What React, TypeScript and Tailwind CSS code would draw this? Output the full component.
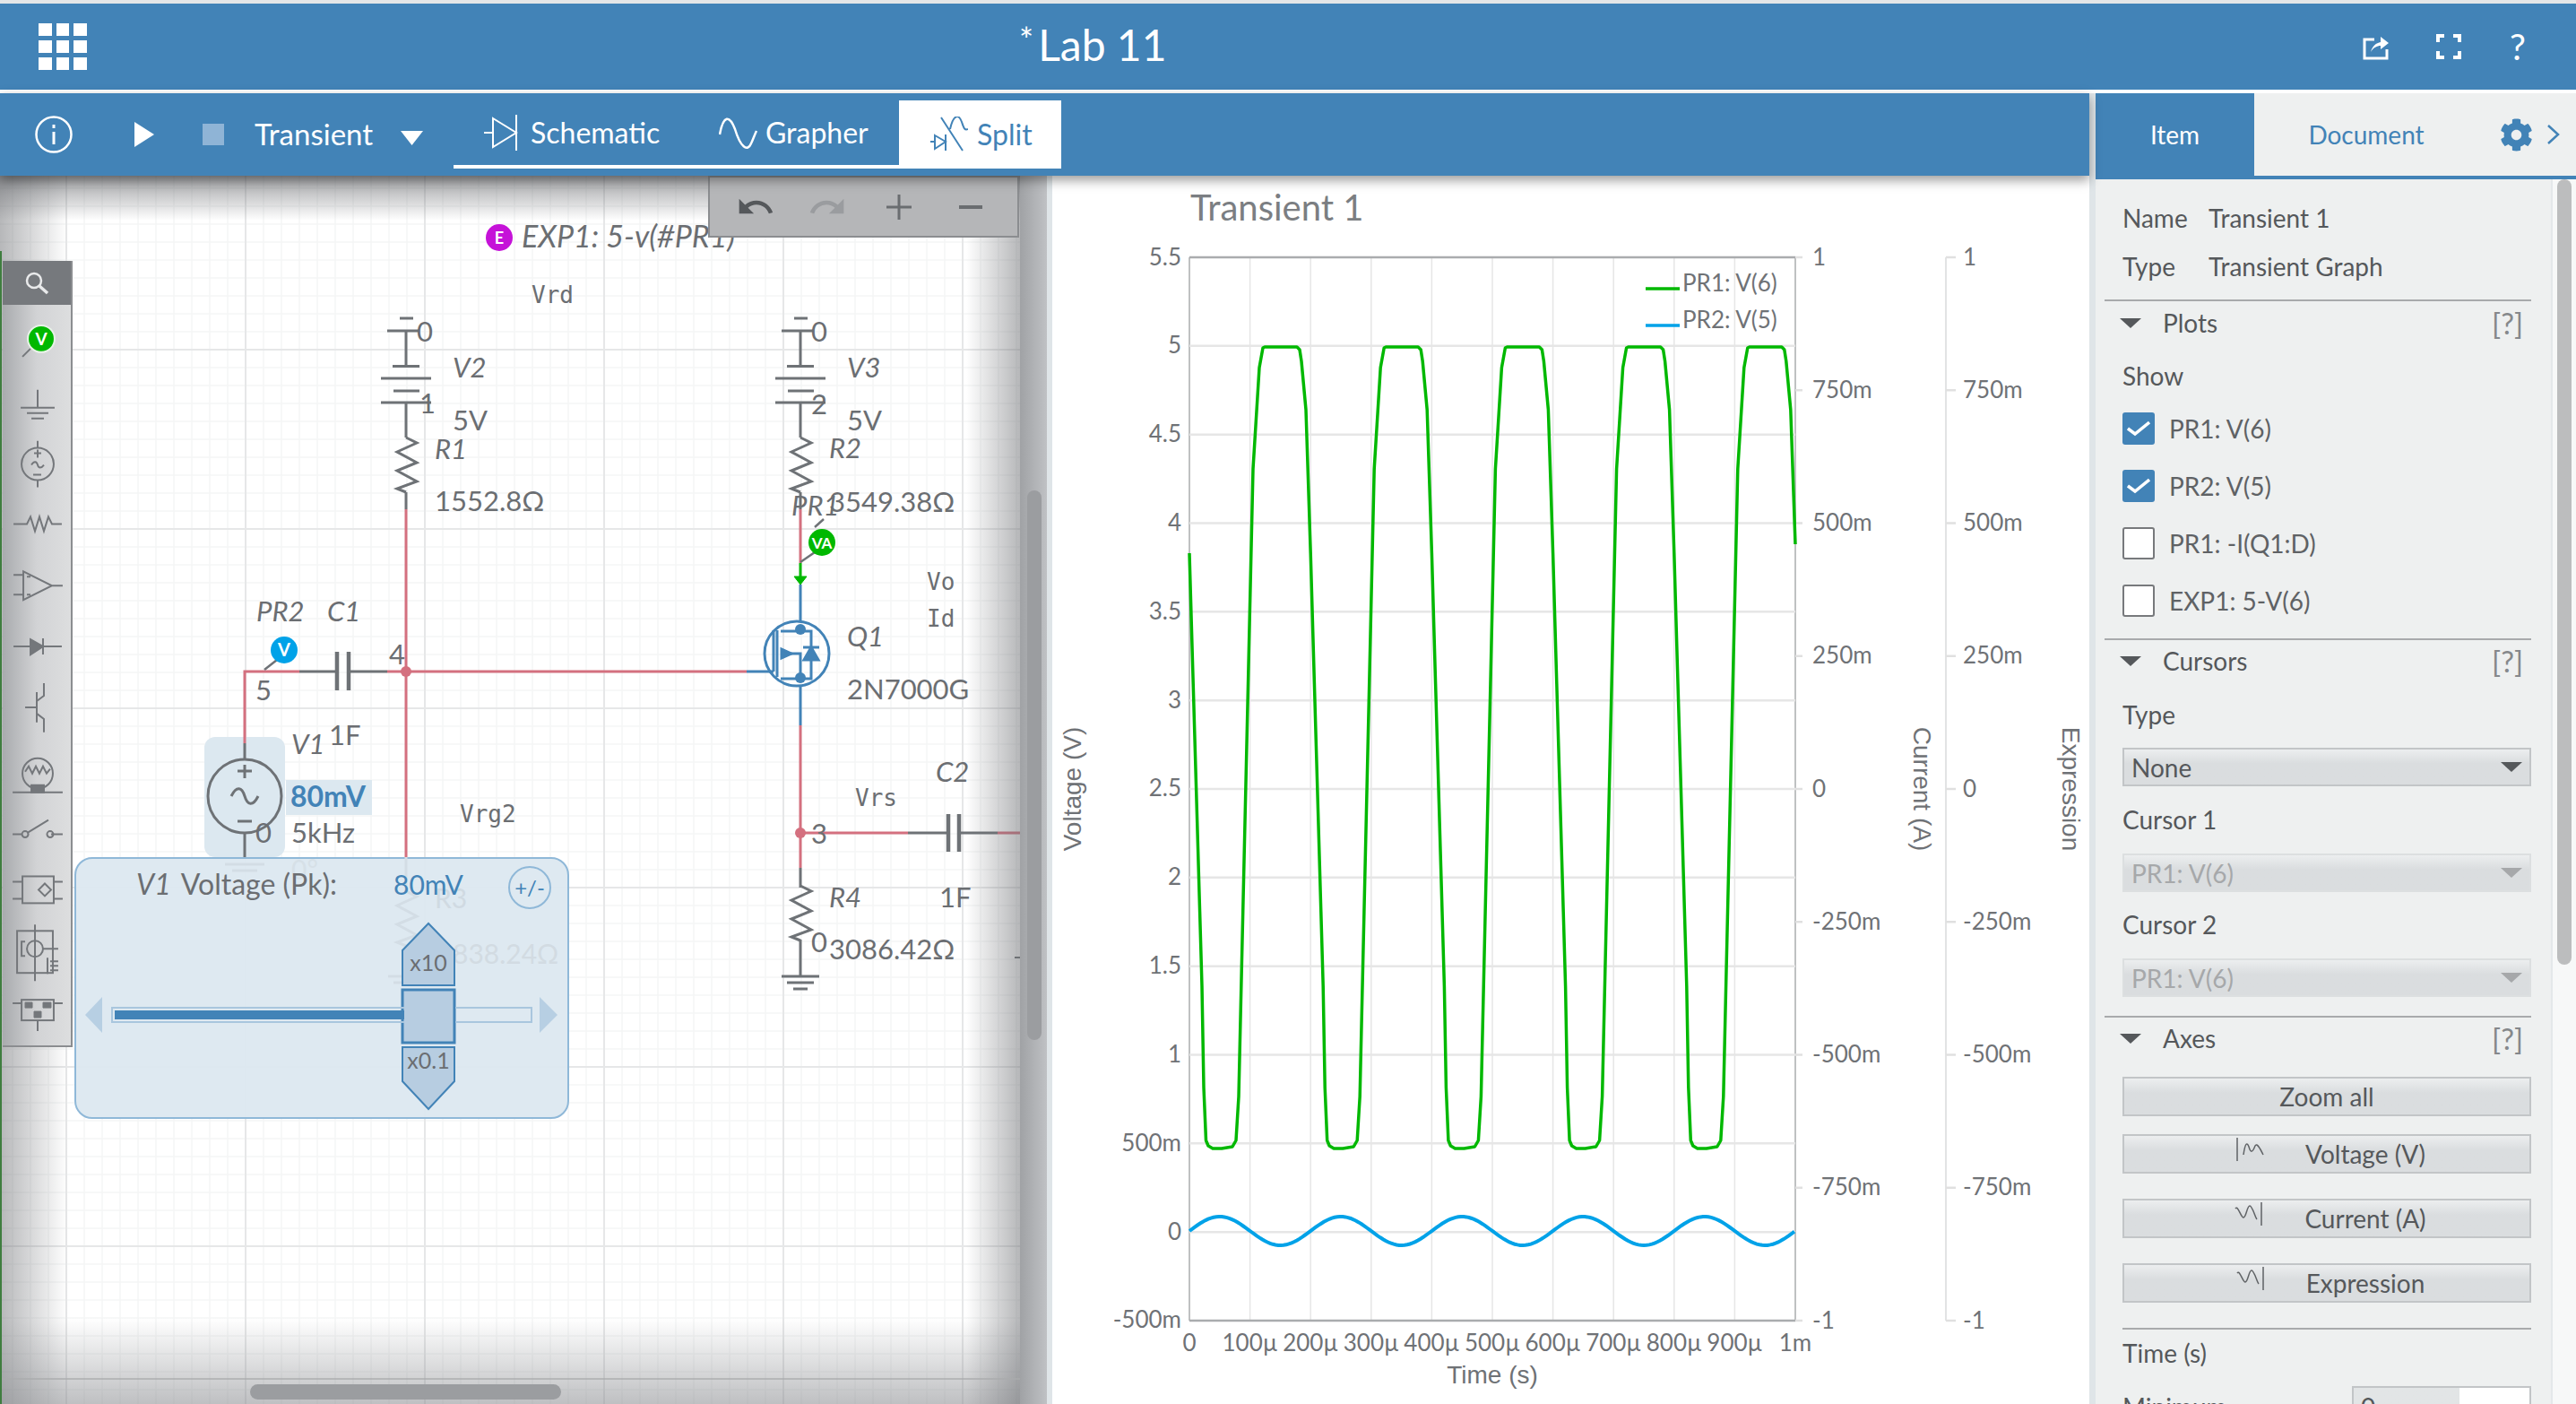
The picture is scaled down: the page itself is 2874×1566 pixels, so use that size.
import React from 'react';
import { FaCog } from 'react-icons/fa';
import { MdUndo, MdRedo } from 'react-icons/md';

const WIRE = '#6e7276';
const PINK = '#d4707f';
const BLUE = '#4283b7';
const GREEN = '#00b800';
const SKY = '#00a2e8';

const GridIcon = () => (
  <div className="grid grid-cols-3 gap-[5px] w-[54px] ml-[43px]">
    {Array.from({ length: 9 }).map((_, i) => (
      <div key={i} className="h-[14px] bg-white" />
    ))}
  </div>
);

const zig = (x: number, y: number) =>
  `M${x} ${y}L${x + 12} ${y + 6}L${x - 10} ${y + 16}L${x + 12} ${y + 28}L${x - 10} ${y + 37}L${x + 12} ${y + 49}L${x - 10} ${y + 57}L${x} ${y + 61}`;

const Battery = ({ x }: { x: number }) => (
  <g stroke={WIRE} strokeWidth="3" fill="none">
    <path d={`M${x - 7} 355H${x + 8}M${x - 21} 369H${x + 14}M${x} 369V408M${x - 15} 408.5H${x + 15}M${x - 28} 422H${x + 28}M${x - 14} 436H${x + 15}M${x - 28} 449H${x + 28}M${x} 449V488`} />
    <path d={zig(x, 488)} />
    <path d={`M${x} 549V568`} />
  </g>
);

const Probe = ({ cx, cy, color, label, lx, ly }: { cx: number; cy: number; color: string; label: string; lx: number; ly: number }) => (
  <g>
    <path d={`M${cx - 8} ${cy + 11}L${lx} ${ly}`} stroke={WIRE} strokeWidth="2.5" />
    <circle cx={cx} cy={cy} r="15" fill={color} />
    <text x={cx} y={cy + 7} textAnchor="middle" fill="white" fontSize={label.length > 1 ? 17 : 20} fontWeight="700">
      {label}
    </text>
  </g>
);

const SchematicCanvas = () => {
  const minorX = Array.from({ length: 60 }, (_, i) => 14 + i * 20);
  const minorY = Array.from({ length: 70 }, (_, i) => 190 + i * 20);
  const majorX = [74, 274, 474, 674, 874, 1074];
  const majorY = [190, 390, 590, 790, 990, 1190, 1390];
  const label = (t: string, x: number, y: number, italic = false) => (
    <text x={x} y={y} fontSize="31" fontStyle={italic ? 'italic' : 'normal'} fill="#6b6e72">
      {t}
    </text>
  );
  const mono = (t: string, x: number, y: number) => (
    <text x={x} y={y} fontSize="26" fill="#6b6e72" className="font-['DejaVu_Sans_Mono',monospace]">
      {t}
    </text>
  );
  return (
    <svg viewBox="0 196 1174 1370" className="absolute inset-0 w-[1174px] h-[1370px]">
      <rect x="0" y="196" width="1174" height="1370" fill="#ffffff" />
      {minorX.map((x) => (
        <line key={x} x1={x} x2={x} y1="196" y2="1566" stroke="#f5f6f6" strokeWidth="1.5" />
      ))}
      {minorY.map((y) => (
        <line key={y} y1={y} y2={y} x1="0" x2="1174" stroke="#f5f6f6" strokeWidth="1.5" />
      ))}
      {majorX.map((x) => (
        <line key={x} x1={x} x2={x} y1="196" y2="1566" stroke="#e6e7e8" strokeWidth="2" />
      ))}
      {majorY.map((y) => (
        <line key={y} y1={y} y2={y} x1="0" x2="1174" stroke="#e6e7e8" strokeWidth="2" />
      ))}

      {/* highlight behind the selected source */}
      <rect x="228" y="822" width="90" height="134" rx="12" fill="#dce8f0" />
      <rect x="319" y="870" width="96" height="39" fill="#dce8f0" />

      {/* pink wires */}
      <g stroke={PINK} strokeWidth="3" fill="none">
        <path d="M453 568V956M273 829V749H334M432 749H833M893 568V628M893 809V968M893 929H1013M1113 929H1138" />
      </g>
      <circle cx="453" cy="749" r="6" fill={PINK} />
      <circle cx="893" cy="929" r="6" fill={PINK} />

      {/* grey parts */}
      <Battery x={453} />
      <Battery x={893} />
      <g stroke={WIRE} strokeWidth="3" fill="none">
        <path d="M334 749H376M389 749H432M1013 929H1058M1070 929H1113M893 968V990M893 1048V1089M872 1089H914M878 1096H908M885 1103H901" />
        <path d={zig(893, 988)} />
        <path d="M376 727V770M389 727V770M1058 908V950M1070 908V950" strokeWidth="4.5" />
        <path d="M273 829V848M273 929V956" />
        <circle cx="273" cy="888" r="41" />
        <path d="M273 853V868M265 860H281M265 916H281M258 888C264 876 270 878 273 888S282 900 288 888" />
      </g>

      {/* Q1 */}
      <g stroke={BLUE} strokeWidth="3" fill="none">
        <path d="M893 652V692M893 766V809M833 749H863M863 749V703M867 703V755" />
        <circle cx="889" cy="729" r="36" />
        <path d="M871 704H905V757H871M871 729H893V757" />
        <circle cx="893" cy="702" r="6" fill={BLUE} stroke="none" />
        <circle cx="893" cy="756" r="6" fill={BLUE} stroke="none" />
        <path d="M883 729L872 724V734Z" fill={BLUE} />
        <path d="M905 722L897 736H913ZM896 722H914" fill={BLUE} />
      </g>
      <path d="M893 628V648" stroke={GREEN} strokeWidth="3" />
      <path d="M886 643H900L893 652Z" fill={GREEN} stroke={GREEN} strokeWidth="1" />

      <Probe cx={317} cy={725} color={SKY} label="V" lx={295} ly={747} />
      <path d="M909 588L919 579" stroke={WIRE} strokeWidth="2.5" />
      <Probe cx={917} cy={605} color={GREEN} label="VA" lx={893} ly={627} />

      <circle cx="557" cy="265" r="15" fill="#c512d8" />
      <text x="557" y="272" textAnchor="middle" fill="white" fontSize="18" fontWeight="700">
        E
      </text>
      <text x="582" y="276" fontSize="34" fontStyle="italic" fill="#6b6e72">
        EXP1: 5-v(#PR1)
      </text>

      {mono('Vrd', 593, 338)}
      {mono('Vrg2', 513, 917)}
      {mono('Vrs', 954, 899)}
      {mono('Vo', 1034, 658)}
      {mono('Id', 1034, 699)}

      {label('0', 465, 381)}
      {label('1', 468, 461)}
      {label('V2', 505, 421, true)}
      {label('5V', 505, 480)}
      {label('R1', 485, 512, true)}
      {label('1552.8Ω', 485, 570)}
      {label('0', 905, 381)}
      {label('2', 905, 462)}
      {label('V3', 945, 421, true)}
      {label('5V', 945, 480)}
      {label('R2', 925, 511, true)}
      {label('3549.38Ω', 925, 571)}
      {label('PR1', 883, 575, true)}
      {label('PR2', 286, 693, true)}
      {label('C1', 365, 693, true)}
      {label('5', 285, 781)}
      {label('4', 434, 741)}
      {label('V1', 325, 841, true)}
      {label('1F', 367, 831)}
      <text x="324" y="900" fontSize="32" fontWeight="700" fill={BLUE}>
        80mV
      </text>
      {label('5kHz', 325, 940)}
      {label('0', 285, 940)}
      {label('Q1', 945, 721, true)}
      {label('2N7000G', 945, 780)}
      {label('3', 905, 941)}
      {label('C2', 1044, 872, true)}
      {label('R4', 925, 1012, true)}
      {label('1F', 1048, 1012)}
      {label('0', 905, 1062)}
      {label('3086.42Ω', 925, 1070)}
      <path d="M1132 1068H1139" stroke={WIRE} strokeWidth="2" />
    </svg>
  );
};

const PartsPalette = () => (
  <div className="absolute left-[3px] top-[95px] w-[78px] h-[877px] flex flex-col border-r-2 border-b-2 border-[#8b8d90] bg-linear-to-r from-[#a9abae] via-[#d2d3d5] to-[#dddedf]">
    <div className="h-[49px] shrink-0 bg-[#76797d] flex items-center justify-center">
      <svg viewBox="0 0 28 28" className="w-[28px] h-[28px]" fill="none" stroke="#e9eaeb" strokeWidth="2.5">
        <circle cx="11" cy="11" r="8" />
        <path d="M17 17L26 25" strokeWidth="3.5" />
      </svg>
    </div>
    <svg viewBox="3 340 78 828" className="w-[78px] h-[828px]" fill="none" stroke="#74777b" strokeWidth="2">
      <path d="M25 398L34 389" />
      <circle cx="46" cy="378" r="15" fill={GREEN} stroke="#e8f2e8" strokeWidth="2" />
      <text x="46" y="385" textAnchor="middle" fontSize="19" fontWeight="700" fill="white" stroke="none">V</text>
      {/* ground */}
      <path d="M42 435V455M23 455H61M30 461H54M35 467H49" />
      {/* ac source */}
      <path d="M42 492V500M42 536V544" />
      <circle cx="42" cy="518" r="18" />
      <path d="M42 502V511M38 506H46M37 530H46M35 519C38 514 41 515 42 519S46 523 49 519" />
      {/* resistor */}
      <path d="M15 585H30L34 577L39 593L44 577L49 593L54 577L58 585H69" />
      {/* opamp */}
      <path d="M26 638V670L58 654ZM15 642H26M15 664H26M58 654H70M30 644H34M30 664H34" />
      {/* diode */}
      <path d="M15 722H34M48 722H69M48 713V731" />
      <path d="M34 714L48 722L34 731Z" fill="#74777b" />
      {/* transistor */}
      <path d="M28 790H41M41 773V807M49 763V777L41 783M41 797L49 803V818" />
      {/* lamp */}
      <circle cx="42" cy="864" r="17" />
      <path d="M14 885H70M28 862L32 856L36 864L40 856L44 864L48 856L52 864L56 859" />
      <path d="M35 877H49V885H35Z" fill="#74777b" />
      {/* switch */}
      <path d="M14 932H24M31 930L54 916M57 932H70" />
      <circle cx="28" cy="932" r="3.5" />
      <circle cx="56" cy="932" r="3.5" />
      {/* controlled source */}
      <path d="M14 985H25M14 1004H25M60 985H70M60 1004H70" />
      <rect x="25" y="979" width="35" height="30" />
      <path d="M50 987L57 994L50 1001L43 994Z" />
      {/* motor box */}
      <rect x="19" y="1040" width="40" height="47" />
      <circle cx="39" cy="1060" r="9" />
      <path d="M39 1033V1096M48 1060H65M28 1052H24V1068H28M53 1070V1088M56 1074H65M56 1079H65M56 1084H65" />
      {/* last part */}
      <path d="M14 1121H24M60 1121H70M42 1140V1152" />
      <rect x="24" y="1117" width="36" height="23" />
      <path d="M28 1120H36V1126H28ZM48 1120H57V1126H48ZM38 1130H46V1137H38Z" fill="#74777b" strokeWidth="1" />
    </svg>
  </div>
);

const UndoBar = () => (
  <div className="absolute left-[790px] top-0 w-[347px] h-[69px] bg-[#b5b6b8] border-2 border-[#8b8d90] flex items-center">
    <MdUndo className="w-[44px] h-[44px] ml-[29px] text-[#55585b]" />
    <MdRedo className="w-[44px] h-[44px] ml-[36px] text-[#9a9c9f]" />
    <svg viewBox="0 0 28 28" className="w-[28px] h-[28px] ml-[44px]" stroke="#6a6d70" strokeWidth="3">
      <path d="M14 0V28M0 14H28" />
    </svg>
    <svg viewBox="0 0 28 28" className="w-[28px] h-[28px] ml-[52px]" stroke="#6a6d70" strokeWidth="4">
      <path d="M1 14H27" />
    </svg>
  </div>
);

const SliderPopup = () => (
  <div className="absolute left-[83px] top-[760px] w-[552px] h-[292px] rounded-[20px] border-2 border-[#8fb8d8] bg-[#dce8f0]/95">
    {/* the schematic showing through the popup */}
    <svg viewBox="0 0 552 292" className="absolute left-[-2px] top-[-2px] w-[552px] h-[292px]">
      <path d="M370 0V38L382 44L360 54L382 66L360 75L382 87L360 95L370 99V132M350 133H378M356 140H378" fill="none" stroke="#d3dde5" strokeWidth="3" />
      <path d="M168 8H212M176 15H204" fill="none" stroke="#d3dde5" strokeWidth="3" />
    </svg>
    <span className="absolute left-[240px] top-[-4px] text-[30px] leading-[30px] text-[#d6e0e7]">0°</span>
    <span className="absolute left-[400px] top-[21px] text-[30px] text-[#d0dae2]">R3</span>
    <span className="absolute left-[420px] top-[83px] text-[30px] text-[#d2dbe2]">838.24Ω</span>

    <div className="relative flex items-center h-[38px] mt-[9px] text-[32px] leading-[38px] text-[#6b6e72]">
      <span className="ml-[67px] italic">V1</span>
      <span className="ml-[11px]">Voltage (Pk):</span>
      <span className="ml-[63px] text-[30px] text-[#4283b7]">80mV</span>
    </div>
    <div className="absolute left-[482px] top-[8px] w-[48px] h-[48px] rounded-full border-2 border-[#8fb8d8] flex items-center justify-center text-[24px] text-[#4283b7]">
      +/-
    </div>
    <svg viewBox="0 0 552 292" className="absolute left-[-2px] top-[-2px] w-[552px] h-[292px]">
      <path d="M31 156L12 176L31 196Z" fill="#b7cfe3" />
      <path d="M519 156L539 176L519 196Z" fill="#b7cfe3" />
      <path d="M366 104L395 74L424 104V143H366Z" fill="#b7cde1" stroke={BLUE} strokeWidth="2" />
      <rect x="366" y="148" width="58" height="59" fill="#b7cde1" stroke={BLUE} strokeWidth="3" />
      <path d="M366 212H424V250L395 281L366 250Z" fill="#b7cde1" stroke={BLUE} strokeWidth="2" />
      <text x="395" y="127" textAnchor="middle" fontSize="25" fill="#6b6e72">x10</text>
      <text x="395" y="236" textAnchor="middle" fontSize="25" fill="#6b6e72">x0.1</text>
    </svg>
    <div className="absolute left-[39px] top-[165px] w-[327px] h-[18px] border-2 border-r-0 border-[#a9c6de] pl-[2px] py-[2px]">
      <div className="w-full h-full bg-[#4283b7]" />
    </div>
    <div className="absolute left-[423px] top-[165px] w-[86px] h-[18px] border-2 border-l-0 border-[#a9c6de]" />
  </div>
);

const SchematicPane = () => (
  <div className="relative w-[1174px] h-full overflow-hidden shrink-0 bg-white">
    <SchematicCanvas />
    {/* vignette round the canvas */}
    <div className="absolute left-0 top-0 w-[76px] h-full pointer-events-none bg-linear-to-r from-[#6e7074]/50 to-transparent" />
    <div className="absolute left-0 top-0 w-[1138px] h-[50px] pointer-events-none bg-linear-to-b from-[#6e7074]/65 to-transparent" />
    <div className="absolute left-0 bottom-0 w-[1138px] h-[96px] pointer-events-none bg-linear-to-t from-[#8a8c90]/55 to-transparent" />
    <div className="absolute left-[1078px] top-0 w-[60px] h-full pointer-events-none bg-linear-to-l from-[#6e7074]/50 to-transparent" />
    <div className="absolute left-0 bottom-0 w-[1138px] h-[29px] border-t-2 border-[#a9abad]/70">
      <div className="absolute left-[279px] top-[5px] w-[347px] h-[17px] rounded-full bg-[#9b9da0]" />
    </div>
    <div className="absolute left-[1138px] top-0 w-[30px] h-full bg-linear-to-r from-[#a0a2a5] to-[#bfc1c4]">
      <div className="absolute left-[8px] top-[351px] w-[16px] h-[613px] rounded-full bg-[#9b9da0]" />
    </div>
    <div className="absolute left-[1168px] top-0 w-[6px] h-full bg-[#dfe5e8]" />
    <div className="absolute left-0 top-[84px] w-[2px] h-[1286px] bg-[#3f7d3f]" />
    <UndoBar />
    <PartsPalette />
    <SliderPopup />
  </div>
);

const greenPoints = () => {
  const cycle: [number, number][] = [
    [0, 617], [14, 1100], [16, 1213], [18.5, 1272], [21, 1278], [26, 1281], [36, 1281], [48, 1279], [52, 1272],
    [55, 1223], [71, 523], [78, 410], [82, 388], [84, 387], [120, 387], [123, 390], [125, 403], [130, 457],
  ];
  const pts: string[] = [];
  for (let c = 0; c < 5; c++) {
    for (const [t, y] of cycle) pts.push(`${(1327 + c * 135.2 + t).toFixed(1)},${y}`);
  }
  pts.push('2003,607');
  return pts.join(' ');
};

const bluePoints = () => {
  const pts: string[] = [];
  for (let x = 0; x <= 676; x += 3) {
    pts.push(`${1327 + x},${(1373 - 16 * Math.sin((x / 135.2) * 2 * Math.PI)).toFixed(1)}`);
  }
  return pts.join(' ');
};

const GraphPane = () => {
  const voltTicks = ['5.5', '5', '4.5', '4', '3.5', '3', '2.5', '2', '1.5', '1', '500m', '0', '-500m'];
  const rightTicks = ['1', '750m', '500m', '250m', '0', '-250m', '-500m', '-750m', '-1'];
  const timeTicks = ['0', '100µ', '200µ', '300µ', '400µ', '500µ', '600µ', '700µ', '800µ', '900µ', '1m'];
  const tickFill = '#6f7276';
  return (
    <div className="flex-1 h-full bg-white">
      <svg viewBox="1174 196 1157 1370" className="w-[1157px] h-[1370px]">
        <text x="1328" y="246" fontSize="40" fill="#7b7e82">Transient 1</text>
        {timeTicks.map((t, i) => {
          const x = 1327 + i * 67.6;
          return (
            <g key={t}>
              <line x1={x} x2={x} y1="287" y2="1473" stroke={i === 0 || i === 10 ? '#aaacae' : '#e6e6e6'} strokeWidth="1.5" />
              <text x={x} y="1507" textAnchor="middle" fontSize="26" fill={tickFill}>{t}</text>
            </g>
          );
        })}
        {voltTicks.map((t, i) => {
          const y = 287 + i * 98.83;
          const edge = i === 0 || i === voltTicks.length - 1;
          return (
            <g key={t}>
              <line x1="1327" x2="2003" y1={y} y2={y} stroke={edge ? '#aaacae' : '#e6e6e6'} strokeWidth="2.5" />
              <text x="1318" y={y + 8.5} textAnchor="end" fontSize="26" fill={tickFill}>{t}</text>
            </g>
          );
        })}
        <line x1="2171" x2="2171" y1="287" y2="1473" stroke="#d9dadb" strokeWidth="1.5" />
        {rightTicks.map((t, i) => {
          const y = 287 + i * 148.25;
          return (
            <g key={t}>
              <line x1="2003" x2="2011" y1={y} y2={y} stroke="#e0e0e0" strokeWidth="2.5" />
              <text x="2022" y={y + 8.5} fontSize="26" fill={tickFill}>{t}</text>
              <line x1="2171" x2="2182" y1={y} y2={y} stroke="#e0e0e0" strokeWidth="2.5" />
              <text x="2190" y={y + 8.5} fontSize="26" fill={tickFill}>{t}</text>
            </g>
          );
        })}
        <polyline points={bluePoints()} fill="none" stroke={SKY} strokeWidth="4" />
        <polyline points={greenPoints()} fill="none" stroke={GREEN} strokeWidth="3.5" strokeLinejoin="round" />
        <line x1="1836" x2="1874" y1="322" y2="322" stroke={GREEN} strokeWidth="3.5" />
        <text x="1877" y="325" fontSize="26" fill={tickFill}>PR1: V(6)</text>
        <line x1="1836" x2="1874" y1="363" y2="363" stroke={SKY} strokeWidth="3.5" />
        <text x="1877" y="366" fontSize="26" fill={tickFill}>PR2: V(5)</text>
        <g className="font-['Liberation_Sans',sans-serif]" fontSize="28" fill={tickFill}>
          <text x="1665" y="1543" textAnchor="middle">Time (s)</text>
          <text transform="translate(1206 880) rotate(-90)" textAnchor="middle">Voltage (V)</text>
          <text transform="translate(2135 880) rotate(90)" textAnchor="middle">Current (A)</text>
          <text transform="translate(2301 880) rotate(90)" textAnchor="middle">Expression</text>
        </g>
      </svg>
    </div>
  );
};

const Triangle = ({ color = '#55585b' }: { color?: string }) => (
  <svg viewBox="0 0 24 11" className="w-[24px] h-[11px]">
    <path d="M0 0H24L12 11Z" fill={color} />
  </svg>
);

const SectionHeader = ({ title, className }: { title: string; className: string }) => (
  <div className={`flex items-center h-[30px] leading-[30px] -ml-[3px] ${className}`}>
    <Triangle />
    <span className="ml-[24px] text-[#55585b]">{title}</span>
    <span className="ml-auto mr-[9px] text-[#85888b] text-[33px]">[?]</span>
  </div>
);

const Check = ({ on, label, className }: { on: boolean; label: string; className: string }) => (
  <div className={`flex items-center h-[36px] ${className}`}>
    {on ? (
      <div className="w-[36px] h-[36px] rounded-[3px] bg-[#4283b7] flex items-center justify-center">
        <svg viewBox="0 0 26 18" className="w-[26px] h-[18px]" fill="none" stroke="white" strokeWidth="3.5">
          <path d="M1 9L9 15L25 2" />
        </svg>
      </div>
    ) : (
      <div className="w-[36px] h-[36px] rounded-[3px] bg-white border-2 border-[#77797c]" />
    )}
    <span className="ml-[16px] text-[#5f6265]">{label}</span>
  </div>
);

const Select = ({ value, disabled, className }: { value: string; disabled?: boolean; className: string }) => (
  <div
    className={`flex items-center h-[43px] pl-[8px] pr-[8px] border-2 bg-linear-to-b from-[#eceeef] to-[#dadddf] to-40% ${
      disabled ? 'border-[#dcdfe0] text-[#a6a8aa]' : 'border-[#c2c5c7] text-[#55585b]'
    } ${className}`}
  >
    <span>{value}</span>
    <span className="ml-auto">
      <Triangle color={disabled ? '#a6a8aa' : '#55585b'} />
    </span>
  </div>
);

const AxisButton = ({ label, icon, className }: { label: string; icon?: 'left' | 'right'; className: string }) => (
  <div className={`relative flex items-center justify-center h-[44px] border-2 border-[#c2c5c7] bg-linear-to-b from-[#eceeef] to-[#dadddf] to-40% text-[#55585b] ${icon ? 'pl-[8px]' : ''} ${className}`}>
    {icon && (
      <svg viewBox="0 0 32 28" className="w-[32px] h-[28px] mr-[46px] -mt-[10px]" fill="none" stroke="#5f6265" strokeWidth="1.5">
        {icon === 'left' ? <path d="M2 1V27M9 20C11 6 13 6 15 11C17 18 19 18 22 10C24 6 28 14 31 20" /> : <path d="M30 1V27M1 8C4 4 7 18 10 18C13 18 14 5 17 5C20 5 23 18 25 20" />}
      </svg>
    )}
    {label}
  </div>
);

const SidePanel = () => (
  <div className="w-[543px] h-full shrink-0 flex border-l-[7px] border-[#dfe5e8] bg-[#eef0f0] text-[28px] text-[#55585b]">
    <div className="w-[536px] flex flex-col">
      <div className="flex items-center h-[96px] shrink-0 border-b-4 border-[#4283b7]">
        <div className="w-[177px] h-full flex items-center justify-center bg-[#4283b7] text-white">Item</div>
        <div className="w-[250px] text-center text-[#4283b7]">Document</div>
        <FaCog className="w-[37px] h-[37px] ml-[24px] text-[#4283b7]" />
        <svg viewBox="0 0 14 24" className="w-[14px] h-[24px] ml-[16px]" fill="none" stroke="#4283b7" strokeWidth="2.5">
          <path d="M1 2L12 12L1 22" />
        </svg>
      </div>
      <div className="flex flex-1 overflow-hidden">
        <div className="w-[508px] pl-[30px] pr-[22px] overflow-hidden">
          <div className="flex h-[30px] leading-[30px] mt-[28px]">
            <span className="w-[96px]">Name</span>
            <span>Transient 1</span>
          </div>
          <div className="flex h-[30px] leading-[30px] mt-[24px]">
            <span className="w-[96px]">Type</span>
            <span>Transient Graph</span>
          </div>
          <div className="h-[2px] bg-[#a8aaac] mt-[22px] -ml-[20px]" />
          <SectionHeader title="Plots" className="mt-[9px]" />
          <div className="h-[30px] leading-[30px] mt-[29px]">Show</div>
          <Check on label="PR1: V(6)" className="mt-[26px]" />
          <Check on label="PR2: V(5)" className="mt-[28px]" />
          <Check on={false} label="PR1: -I(Q1:D)" className="mt-[28px]" />
          <Check on={false} label="EXP1: 5-V(6)" className="mt-[28px]" />
          <div className="h-[2px] bg-[#a8aaac] mt-[24px] -ml-[20px]" />
          <SectionHeader title="Cursors" className="mt-[8px]" />
          <div className="h-[30px] leading-[30px] mt-[30px]">Type</div>
          <Select value="None" className="mt-[22px]" />
          <div className="h-[30px] leading-[30px] mt-[22px]">Cursor 1</div>
          <Select value="PR1: V(6)" disabled className="mt-[23px]" />
          <div className="h-[30px] leading-[30px] mt-[21px]">Cursor 2</div>
          <Select value="PR1: V(6)" disabled className="mt-[23px]" />
          <div className="h-[2px] bg-[#a8aaac] mt-[21px] -ml-[20px]" />
          <SectionHeader title="Axes" className="mt-[8px]" />
          <AxisButton label="Zoom all" className="mt-[28px]" />
          <AxisButton label="Voltage (V)" icon="left" className="mt-[20px]" />
          <AxisButton label="Current (A)" icon="right" className="mt-[28px]" />
          <AxisButton label="Expression" icon="right" className="mt-[28px]" />
          <div className="h-[2px] bg-[#a8aaac] mt-[28px]" />
          <div className="h-[30px] leading-[30px] mt-[11px]">Time (s)</div>
          <div className="flex mt-[22px]">
            <span className="w-[256px] leading-[30px] mt-[8px]">Minimum</span>
            <div className="flex-1 h-[44px] border-2 border-[#c2c5c7] bg-linear-to-r from-[#e2e5e6] from-60% to-white to-60% pl-[8px]">0</div>
          </div>
        </div>
        <div className="w-[28px] border-l-2 border-[#e4e8ea] bg-[#f7f8f8] pl-[5px]">
          <div className="w-[16px] h-[876px] rounded-full bg-[#bcbdbe]" />
        </div>
      </div>
    </div>
  </div>
);

const TopBar = () => (
  <div className="h-[96px] mt-[4px] shrink-0 bg-[#4283b7] flex items-center text-white">
    <GridIcon />
    <div className="ml-[1040px] flex items-start font-normal -mt-[5px]">
      <span className="text-[38px] leading-[38px] mt-[2px] mr-[5px]">*</span>
      <span className="text-[48px] leading-[54px]">Lab 11</span>
    </div>
    <div className="ml-auto flex items-center mr-[56px]">
      <svg viewBox="0 0 30 30" className="w-[30px] h-[30px]" fill="none" stroke="white" strokeWidth="3">
        <path d="M13 7H2V28H27V18" />
        <path d="M9 21C11 14 15 11 20 10V4L29 11L20 18V14C16 14 12 16 9 21Z" fill="white" stroke="none" />
      </svg>
      <svg viewBox="0 0 28 28" className="w-[28px] h-[28px] ml-[52px]" fill="none" stroke="white" strokeWidth="4">
        <path d="M2 9V2H9M19 2H26V9M26 19V26H19M9 26H2V19" />
      </svg>
      <span className="ml-[54px] text-[40px] leading-[44px]">?</span>
    </div>
  </div>
);

const ModeBar = () => (
  <div className="relative z-10 h-[92px] shrink-0 bg-[#4283b7] flex items-center text-white text-[32px] shadow-[0_5px_12px_rgba(0,0,0,0.4)]">
    <svg viewBox="0 0 42 42" className="w-[42px] h-[42px] ml-[39px]" fill="none" stroke="white" strokeWidth="2.5">
      <circle cx="21" cy="21" r="19.5" />
      <path d="M21 18V32M21 10V14" strokeWidth="3" />
    </svg>
    <svg viewBox="0 0 22 28" className="w-[22px] h-[28px] ml-[69px]">
      <path d="M0 0L22 14L0 28Z" fill="white" />
    </svg>
    <div className="w-[24px] h-[24px] ml-[54px] bg-[#8fb4d6]" />
    <span className="ml-[34px] w-[132px] text-[33px]">Transient</span>
    <svg viewBox="0 0 25 16" className="w-[25px] h-[16px] ml-[31px] mt-[8px]">
      <path d="M0 0H25L12.5 16Z" fill="white" />
    </svg>
    <div className="ml-[34px] flex h-[76px]">
      <div className="w-[270px] flex items-center border-b-4 border-white pl-[34px]">
        <svg viewBox="0 0 42 40" className="w-[42px] h-[40px]" fill="none" stroke="white" strokeWidth="2">
          <path d="M0 20H10M10 4L36 20L10 36ZM36 0V40" />
        </svg>
        <span className="ml-[10px]">Schematic</span>
      </div>
      <div className="w-[227px] flex items-center border-b-4 border-white pl-[26px]">
        <svg viewBox="0 0 44 36" className="w-[44px] h-[36px]" fill="none" stroke="white" strokeWidth="2.5">
          <path d="M1 20C5 -2 12 -2 18 14C24 34 32 40 36 30C38 26 40 20 42 16" />
        </svg>
        <span className="ml-[8px]">Grapher</span>
      </div>
      <div className="w-[181px] flex items-center bg-white text-[#4283b7] pl-[35px]">
        <svg viewBox="0 0 42 40" className="w-[42px] h-[40px]" fill="none" stroke="#4283b7" strokeWidth="2">
          <path d="M0 28H5M5 21L17 28L5 36ZM17 20V38M12 1L36 38M22 14C26 -4 32 -2 35 6C37 12 38 16 42 14" />
        </svg>
        <span className="ml-[10px]">Split</span>
      </div>
    </div>
  </div>
);

export default function App() {
  return (
    <div className="w-[2874px] h-[1566px] overflow-hidden flex flex-col bg-[#e4e6e7] font-['Lato',sans-serif]">
      <TopBar />
      <div className="h-[4px] shrink-0 bg-white" />
      <div className="flex flex-1 min-h-0">
        <div className="w-[2331px] shrink-0 flex flex-col">
          <ModeBar />
          <div className="flex flex-1 min-h-0">
            <SchematicPane />
            <GraphPane />
          </div>
        </div>
        <SidePanel />
      </div>
    </div>
  );
}
